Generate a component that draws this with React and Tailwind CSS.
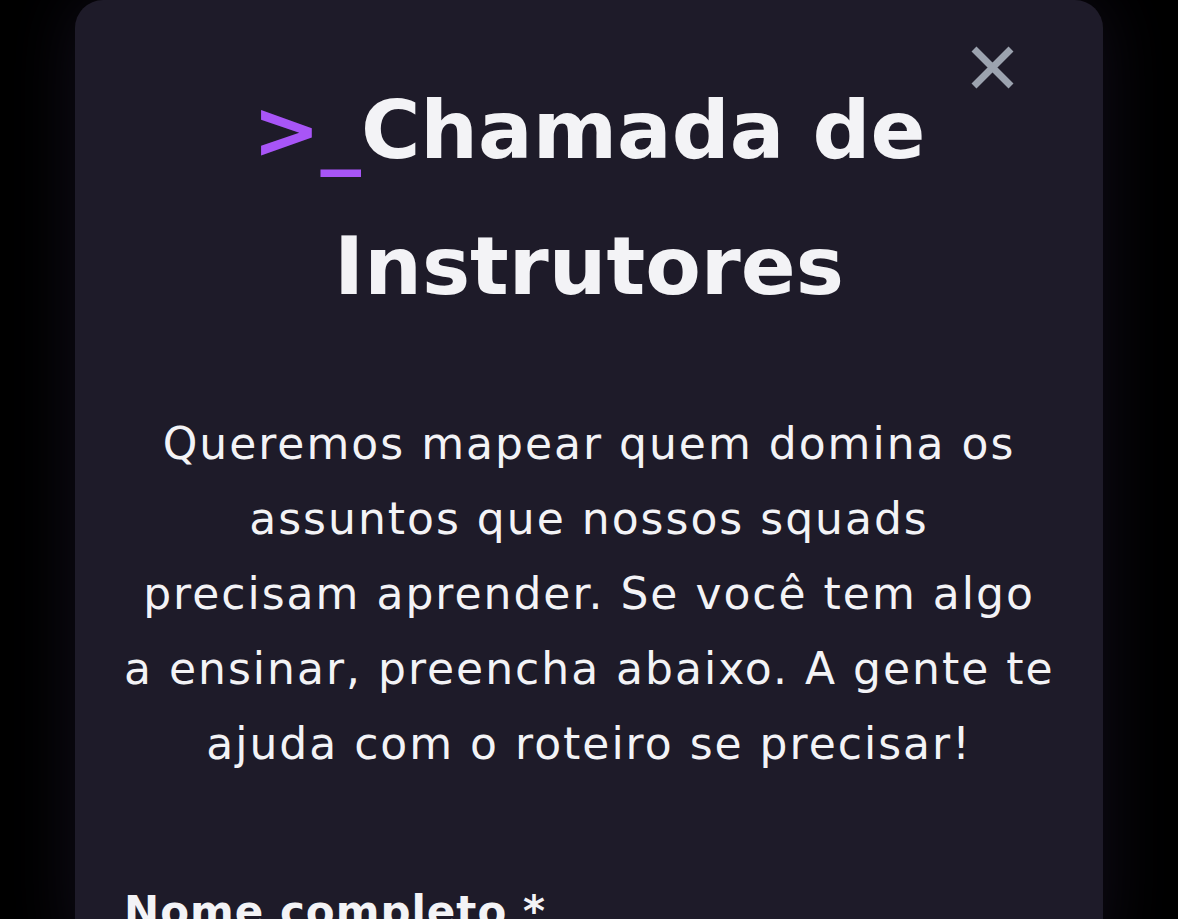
import React from 'react';

const paragraphLines = [
    'Queremos mapear quem domina os',
    'assuntos que nossos squads',
    'precisam aprender. Se você tem algo',
    'a ensinar, preencha abaixo. A gente te',
    'ajuda com o roteiro se precisar!'
];

const App = () => {
    return (
        <div className="min-h-screen h-[919px] overflow-hidden bg-black px-[75px] pr-[75px]" style={{ fontFamily: '"DejaVu Sans", "Open Sans", sans-serif' }}>
            <div className="relative w-[1028px] h-[960px] bg-[#1e1b29] rounded-[28px] shadow-[0_0_70px_rgba(40,30,60,0.45)] px-[49px] pt-[62px]">
                <button
                    type="button"
                    aria-label="Fechar"
                    className="absolute top-[46px] right-[89px] w-[43px] h-[43px] text-[#9ca3af]"
                >
                    <svg viewBox="0 0 43 43" className="w-full h-full" fill="none" stroke="currentColor" strokeWidth="7">
                        <path d="M3 3L40 40M40 3L3 40" />
                    </svg>
                </button>

                <h1 className="text-center font-bold text-[#f3f3f6] text-[81px] leading-[136px]">
                    <span className="text-[#a855f7]">&gt;_</span>Chamada de
                    <br />
                    Instrutores
                </h1>

                <p className="mt-[72px] text-center text-[#f3f3f6] text-[44px] leading-[75px] tracking-[2px]">
                    {paragraphLines.map((line) => (
                        <span key={line} className="block whitespace-nowrap">{line}</span>
                    ))}
                </p>

                <div className="mt-[101px]">
                    <label htmlFor="nome" className="block font-bold text-[#f3f3f6] text-[42px] leading-[60px] tracking-[1px]">
                        Nome completo *
                    </label>
                </div>
            </div>
        </div>
    );
};

export default App;
